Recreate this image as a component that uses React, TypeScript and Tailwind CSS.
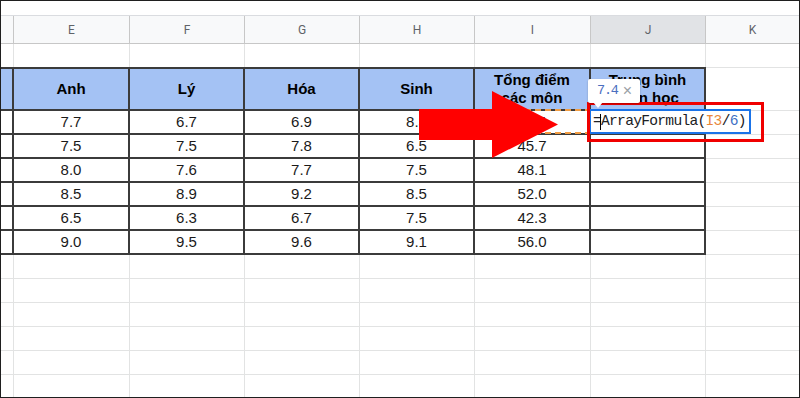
import React from 'react';

// column widths incl. right border: D (cut), E, F, G, H, I, J, then K fills
const widths = ['w-[13px]', 'w-[116px]', 'w-[115px]', 'w-[115px]', 'w-[115px]', 'w-[116px]', 'w-[115px]'];
const letters = ['', 'E', 'F', 'G', 'H', 'I', 'J'];

const rows = [
    ['7.7', '6.7', '6.9', '8.3', '44.4', ''],
    ['7.5', '7.5', '7.8', '6.5', '45.7', ''],
    ['8.0', '7.6', '7.7', '7.5', '48.1', ''],
    ['8.5', '8.9', '9.2', '8.5', '52.0', ''],
    ['6.5', '6.3', '6.7', '7.5', '42.3', ''],
    ['9.0', '9.5', '9.6', '9.1', '56.0', ''],
];

const heads = ['Anh', 'Lý', 'Hóa', 'Sinh', 'Tổng điểm\ncác môn', 'Trung bình\nmôn học'];

const GrayRow: React.FC<{ h: string }> = ({ h }) => (
    <div className={`flex ${h} border-b border-[#e2e3e3]`}>
        {widths.map((w, i) => (
            <div key={i} className={`${w} shrink-0 border-r border-[#e2e3e3]`} />
        ))}
        <div className="flex-1" />
    </div>
);

const App: React.FC = () => {
    return (
        <div className="w-[800px] h-[398px] bg-white border border-[#1f1f1f] overflow-hidden relative font-['Liberation_Sans',Arial,sans-serif] text-black">
            {/* toolbar remnant */}
            <div className="h-[15px] border-b border-[#dadce0]" />

            {/* column letters */}
            <div className="flex h-[28px] bg-[#f8f9fa] border-b border-[#c7c7c7] text-[12px] text-[#5f6368] font-['Roboto',Arial,sans-serif]">
                {widths.map((w, i) => (
                    <div
                        key={i}
                        className={`${w} shrink-0 border-r border-[#c7c7c7] flex items-center justify-center ${i === 6 ? 'bg-[#e1e3e6]' : ''}`}
                    >
                        {letters[i]}
                    </div>
                ))}
                <div className="flex-1 flex items-center justify-center">K</div>
            </div>

            {/* empty row 2 */}
            <div className="flex h-[23px]">
                {widths.map((w, i) => (
                    <div key={i} className={`${w} shrink-0 border-r border-[#e2e3e3]`} />
                ))}
                <div className="flex-1" />
            </div>

            {/* table header */}
            <div className="flex h-[44px]">
                <div className={`${widths[0]} shrink-0 bg-[#a4c2f4] border-y-2 border-r-2 border-[#3b3b3b]`} />
                {heads.map((t, i) => (
                    <div
                        key={i}
                        className={`${widths[i + 1]} shrink-0 bg-[#a4c2f4] border-y-2 border-r-2 border-[#3b3b3b] flex items-center justify-center text-center whitespace-pre-line font-bold text-[15px] leading-[18px]`}
                    >
                        {t}
                    </div>
                ))}
                <div className="flex-1 border-y border-[#e2e3e3]" />
            </div>

            {/* data rows */}
            {rows.map((r, ri) => (
                <div key={ri} className="flex h-[24px]">
                    <div className={`${widths[0]} shrink-0 border-b-2 border-r-2 border-[#3b3b3b]`} />
                    {r.map((v, i) => (
                        <div
                            key={i}
                            className={`${widths[i + 1]} shrink-0 border-b-2 border-r-2 border-[#3b3b3b] flex items-center justify-center text-[15px] text-[#1a1a1a]`}
                        >
                            {v}
                        </div>
                    ))}
                    <div className="flex-1 border-b border-[#e2e3e3]" />
                </div>
            ))}

            {/* empty rows below */}
            {[0, 1, 2, 3, 4, 5].map(i => (
                <GrayRow key={i} h="h-[24px]" />
            ))}

            {/* I3 referenced range */}
            <div className="absolute left-[474px] top-[108px] w-[116px] h-[25px] border-2 border-dashed border-[#f29d43]" />

            {/* J3 editor */}
            <div className="absolute left-[588px] top-[108px] w-[162px] h-[25px] border-2 border-[#1a73e8] bg-white flex items-center pl-[2px] font-['Liberation_Mono',monospace] text-[14.6px] tracking-[-0.72px] text-[#202124] whitespace-pre">
                <span>=</span>
                <span className="w-px h-[16px] bg-black -ml-px" />
                <span>ArrayFormula(</span>
                <span className="text-[#e8883a]">I3</span>
                <span>/</span>
                <span className="text-[#3d6fc4]">6</span>
                <span>)</span>
            </div>

            {/* red highlight box */}
            <div className="absolute left-[586px] top-[101px] w-[177px] h-[40px] border-[3px] border-[#f00000]" />

            {/* value preview tooltip */}
            <div className="absolute left-[587px] top-[78px] w-[52px] h-[24px] bg-white rounded-[2px] shadow-[0_1px_2px_rgba(0,0,0,0.25)] flex items-center pl-[9px] gap-[5px]">
                <span className="font-['Liberation_Mono',monospace] text-[13.5px] tracking-[-1.2px] text-[#4b6fbf]">7.4</span>
                <span className="text-[16px] leading-none text-[#9aa0a6]">×</span>
                <span className="absolute left-[5px] -bottom-[5px] w-0 h-0 border-l-[5px] border-r-[5px] border-t-[6px] border-l-transparent border-r-transparent border-t-white" />
            </div>

            {/* big red arrow */}
            <svg className="absolute left-[418px] top-[90px]" width="140" height="68" viewBox="0 0 140 68">
                <polygon points="0,18 73,18 73,0 139,33.5 73,67 73,49 0,49" fill="#ff0000" />
            </svg>
        </div>
    );
};

export default App;
